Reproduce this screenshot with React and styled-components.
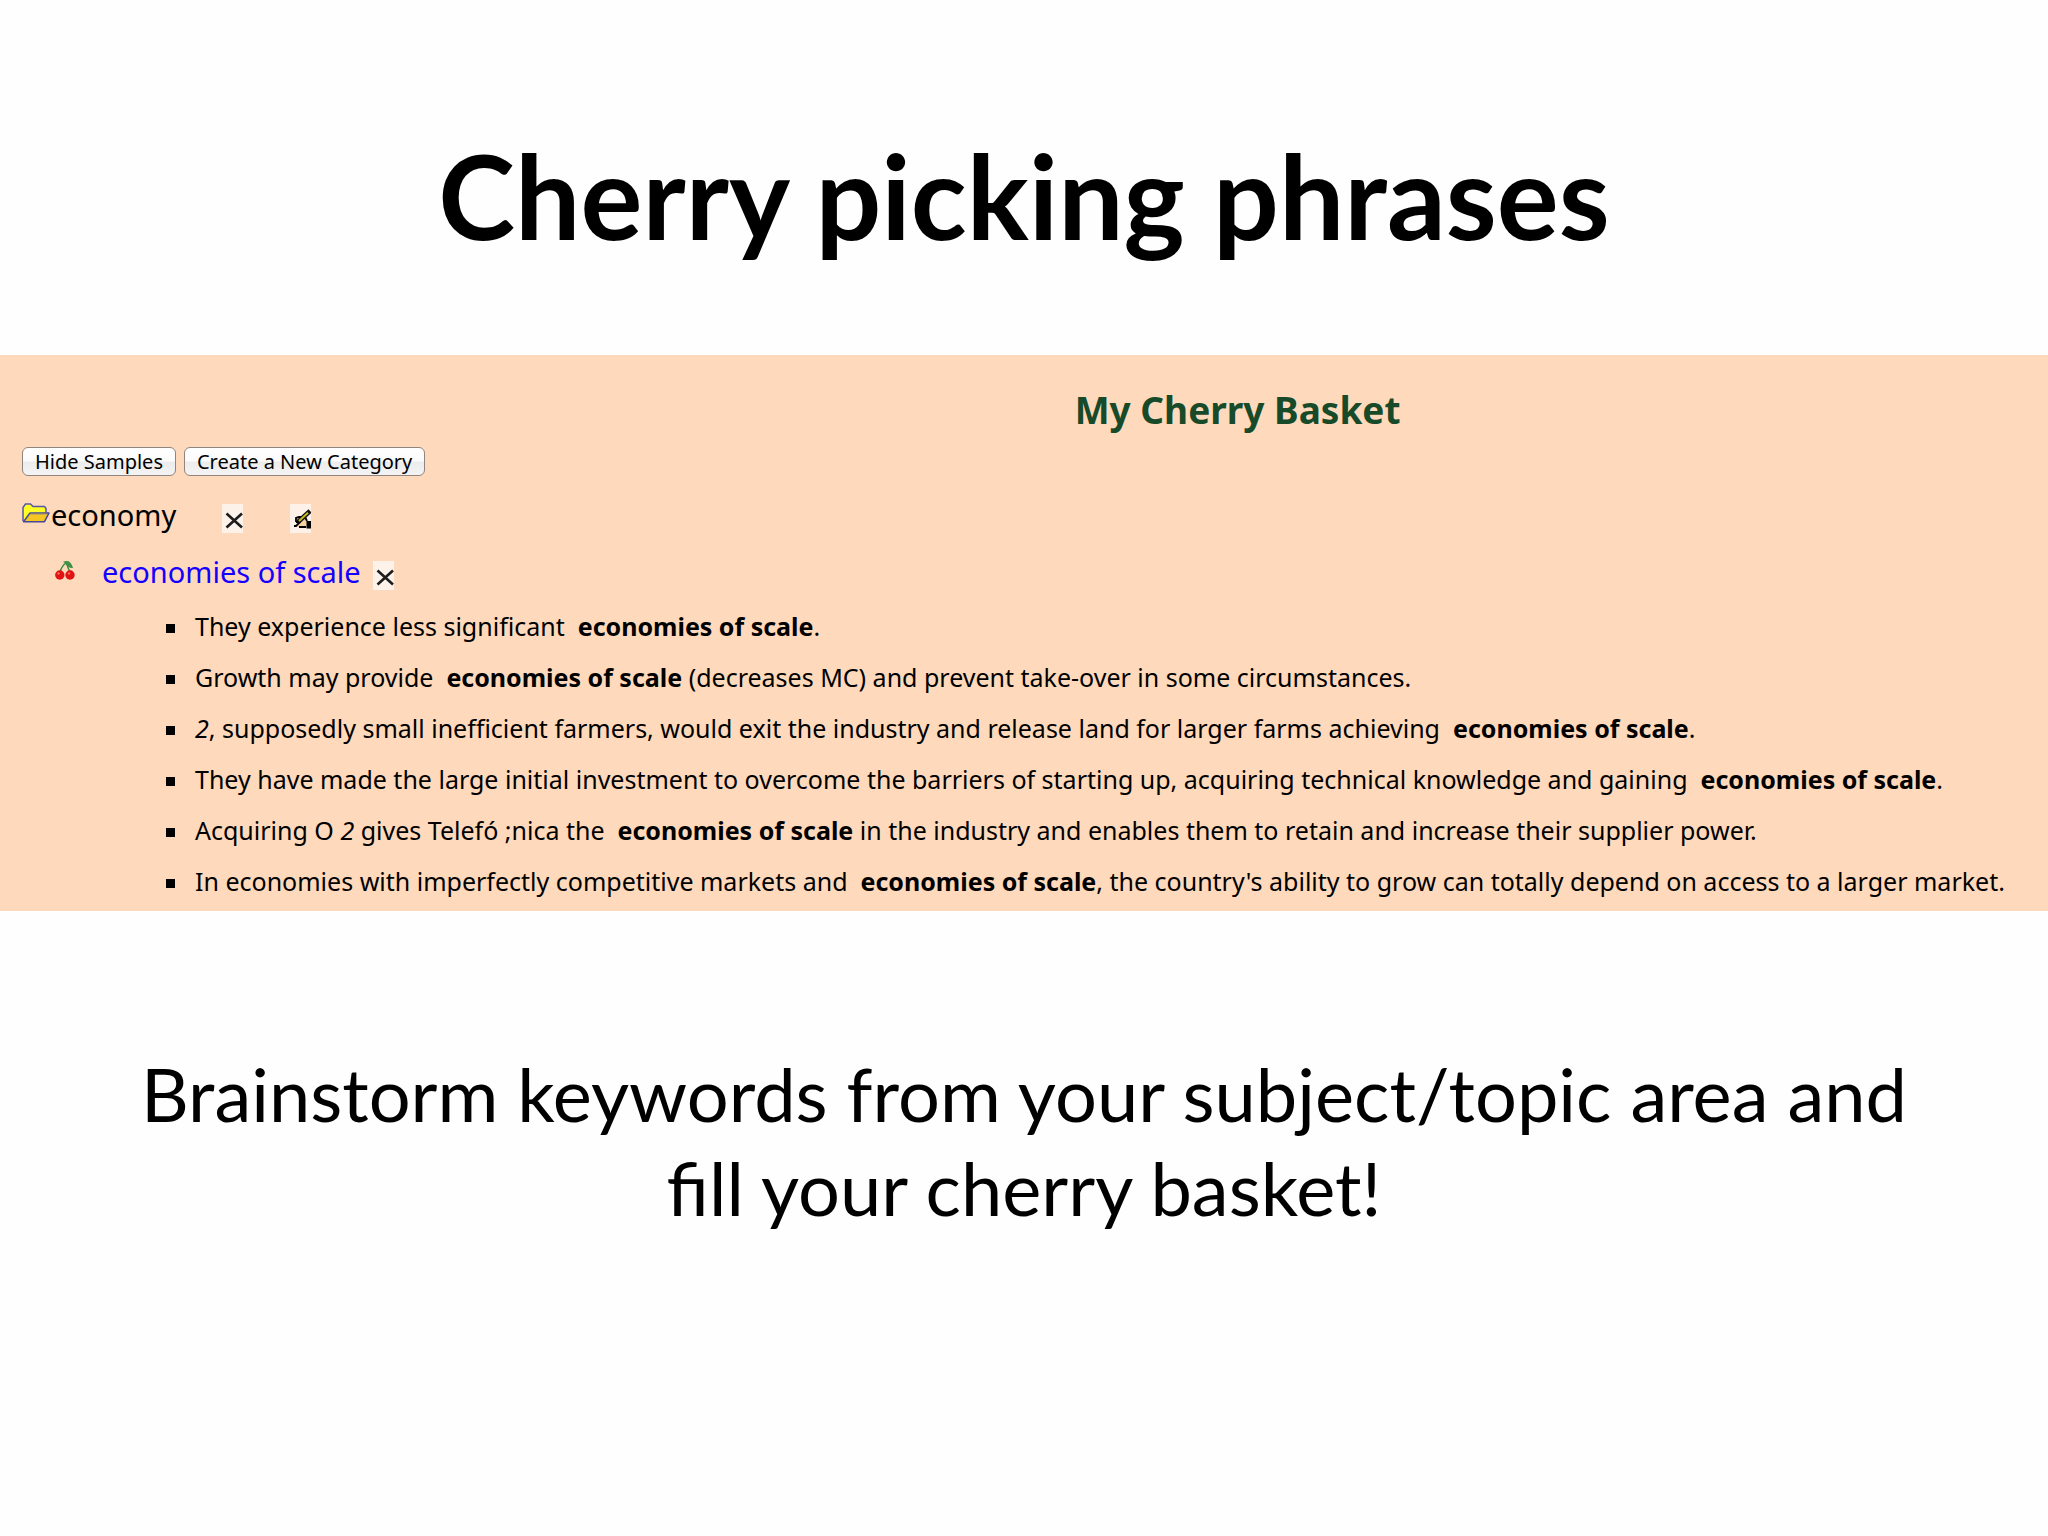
import React from 'react';
import styled, { createGlobalStyle } from 'styled-components';

const GlobalStyle = createGlobalStyle`
  body {
    margin: 0;
    background: #fefefe;
    color: #000;
  }
`;

const phrase = 'economies of scale';

const samples = [
  { before: 'They experience less significant', after: '.' },
  {
    before: 'Growth may provide',
    after: ' (decreases MC) and prevent take-over in some circumstances.',
  },
  {
    before: (
      <>
        <em>2</em>, supposedly small inefficient farmers, would exit the industry
        and release land for larger farms achieving
      </>
    ),
    after: '.',
  },
  {
    before:
      'They have made the large initial investment to overcome the barriers of starting up, acquiring technical knowledge and gaining',
    after: '.',
  },
  {
    before: (
      <>
        Acquiring O <em>2</em> gives Telefó ;nica the
      </>
    ),
    after:
      ' in the industry and enables them to retain and increase their supplier power.',
  },
  {
    before: 'In economies with imperfectly competitive markets and',
    after:
      ", the country's ability to grow can totally depend on access to a larger market.",
  },
];

const FolderIcon = () => (
  <svg width="28" height="20" viewBox="0 0 28 20" aria-hidden="true">
    <path
      d="M1 18V4.500L3.500 1h5L11 3.500h11.500L24 5.500v4"
      fill="#ffff33"
      stroke="#5558a0"
      strokeWidth="1.500"
    />
    <path d="M2.500 5v10L7 8.500h15V5H10L8 2.500H4.500z" fill="#ffff22" />
    <path
      d="M1.500 18.700L8 10h19l-4.500 8.700z"
      fill="#f5c522"
      stroke="#44479a"
      strokeWidth="1.500"
      strokeLinejoin="round"
    />
    <path d="M8.500 11.200h16" stroke="#b0a070" strokeWidth="1" />
  </svg>
);

const CherryIcon = () => (
  <svg width="22" height="20" viewBox="0 0 22 20" aria-hidden="true">
    <path
      d="M6 12C7 8 9 5 13 2M13 2c0 4 1 7 3 10"
      fill="none"
      stroke="#3c8a3c"
      strokeWidth="1.500"
    />
    <path d="M9 2c3-2 8-2 10 6-4 0-7-2-8-5z" fill="#3f9148" />
    <circle cx="5.800" cy="15" r="4.700" fill="#e01212" />
    <circle cx="16" cy="15" r="4.700" fill="#e01212" />
    <circle cx="4.500" cy="13.500" r="1.200" fill="#f56a5a" />
    <circle cx="15" cy="13.500" r="1.200" fill="#f56a5a" />
  </svg>
);

const CrossIcon = () => (
  <svg width="21" height="29" viewBox="0 0 21 29" aria-hidden="true">
    <path
      d="M4.500 9.500L20 23.500M20 9.500L4.500 23.500"
      stroke="#1c1c1c"
      strokeWidth="2.600"
    />
  </svg>
);

const WriteIcon = () => (
  <svg width="21" height="29" viewBox="0 0 21 29" aria-hidden="true">
    <path d="M6 15l4-3h4l3 3v7l-2 1H8l-3-1 3-3z" fill="#f3d3a4" />
    <path
      d="M4 22h2l4-4M6 18V14l3-1h3M6 18h5M9 23h7M15 13l2 4"
      fill="none"
      stroke="#000"
      strokeWidth="1.800"
    />
    <path d="M8 18L20 7" stroke="#111" strokeWidth="4.500" />
    <path d="M9 17L18 8.800" stroke="#c9bd25" strokeWidth="2" />
    <path d="M16.500 17H21v7.500h-4.500z" fill="#000" />
  </svg>
);

const App = () => (
  <>
    <GlobalStyle />
    <Slide>
      <Title>Cherry picking phrases</Title>
      <Basket>
        <BasketTitle>My Cherry Basket</BasketTitle>
        <Toolbar>
          <Button type="button">Hide Samples</Button>
          <Button type="button">Create a New Category</Button>
        </Toolbar>
        <Category>
          <FolderIcon />
          <CategoryName>economy</CategoryName>
          <IconButton type="button" aria-label="Delete category">
            <CrossIcon />
          </IconButton>
          <IconButton type="button" aria-label="Rename category">
            <WriteIcon />
          </IconButton>
        </Category>
        <Cherry>
          <CherryIcon />
          <PhraseLink href="#samples">{phrase}</PhraseLink>
          <IconButton type="button" aria-label="Delete phrase">
            <CrossIcon />
          </IconButton>
        </Cherry>
        <Samples id="samples">
          {samples.map(({ before, after }, i) => (
            <li key={i}>
              {before}&nbsp; <b>{phrase}</b>
              {after}
            </li>
          ))}
        </Samples>
      </Basket>
      <Caption>
        Brainstorm keywords from your subject/topic area and fill your cherry
        basket!
      </Caption>
    </Slide>
  </>
);

const Slide = styled.main`
  font-family: Lato, sans-serif;
  overflow: hidden;
`;

const Title = styled.h1`
  margin: 0;
  padding: 126px 40px 89px;
  font-size: 116px;
  line-height: 140px;
  font-weight: 700;
  text-align: center;
`;

const Basket = styled.section`
  padding: 35px 0 16px 22px;
  background: #fed9bb;
  font-family: 'Noto Sans', sans-serif;
  white-space: nowrap;
`;

const BasketTitle = styled.h2`
  margin: 0;
  padding-left: 20%;
  color: #174a29;
  font-size: 37px;
  line-height: 40px;
  text-align: center;
`;

const Toolbar = styled.div`
  display: flex;
  gap: 8px;
  margin-top: 17px;
`;

const Button = styled.button`
  height: 29px;
  padding: 0 12px;
  border: 1px solid #8f8580;
  border-radius: 6px;
  background: linear-gradient(#fff 0%, #fbfbfb 48%, #ececec 52%, #f4f4f4 100%);
  color: #000;
  font-family: inherit;
  font-size: 20px;
  line-height: 24px;
`;

const IconRow = styled.div`
  display: flex;
  align-items: flex-start;
  height: 32px;
  margin-top: 25px;

  > svg {
    margin-top: 2px;
  }
`;

const Category = styled(IconRow)`
  button + button {
    margin-left: 47px;
  }
`;

const CategoryName = styled.span`
  width: 171px;
  padding-left: 1px;
  font-size: 29px;
  line-height: 28px;
`;

const Cherry = styled(IconRow)`
  padding-left: 32px;
`;

const PhraseLink = styled.a`
  margin: 0 12px 0 26px;
  color: #1400ff;
  font-size: 29px;
  line-height: 28px;
  text-decoration: none;
`;

const IconButton = styled.button`
  align-self: flex-end;
  width: 21px;
  height: 29px;
  padding: 0;
  border: 0;
  background: #fdf2ea;

  svg {
    display: block;
  }
`;

const Samples = styled.ul`
  margin: 23px 0 0;
  padding: 0 0 0 144px;
  list-style: none;
  font-size: 25px;
  line-height: 27px;

  li + li {
    margin-top: 24px;
  }

  li::before {
    content: '';
    display: inline-block;
    width: 9px;
    height: 9px;
    margin-right: 20px;
    background: #000;
    vertical-align: 3px;
  }
`;

const Caption = styled.p`
  margin: 0;
  padding: 136px 120px 40px;
  font-size: 74px;
  line-height: 94px;
  text-align: center;
`;

export default App;
